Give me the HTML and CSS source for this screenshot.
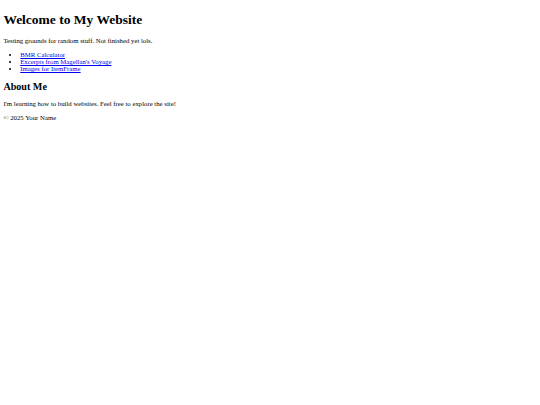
FILE: index.html
```html
<!DOCTYPE html>
<html lang="en">
<head>
<meta charset="utf-8">
<title>My Website</title>
<link rel="stylesheet" href="styles.css">
</head>
<body>
<header class="site-header">
  <h1 class="title">Welcome to My Website</h1>
  <p class="tagline">Testing grounds for random stuff. Not finished yet lols.</p>
</header>
<nav class="site-nav">
  <ul class="links">
    <li><a href="#">BMR Calculator</a></li>
    <li><a href="#">Excerpts from Magellan's Voyage</a></li>
    <li><a href="#">Images for ItemFrame</a></li>
  </ul>
</nav>
<section class="about">
  <h2 class="about-title">About Me</h2>
  <p>I'm learning how to build websites. Feel free to explore the site!</p>
</section>
<footer class="site-footer">
  <p>&copy; 2025 Your Name</p>
</footer>
</body>
</html>
```
FILE: styles.css
```css
html {
  background: #ffffff;
}
body {
  margin: 3.375px;
  font-family: "Liberation Serif", "Times New Roman", serif;
  font-size: 6.75px;
  color: #000000;
}
.title {
  font-size: 2em;
  margin: 0.67em 0;
  font-weight: bold;
}
.about-title {
  font-size: 1.5em;
  margin: 0.83em 0;
  font-weight: bold;
}
p {
  margin: 1em 0;
}
.links {
  margin: 1em 0;
  padding-left: 16.875px;
  list-style: disc;
}
.links a {
  color: #0000ee;
  text-decoration: underline;
}
```
